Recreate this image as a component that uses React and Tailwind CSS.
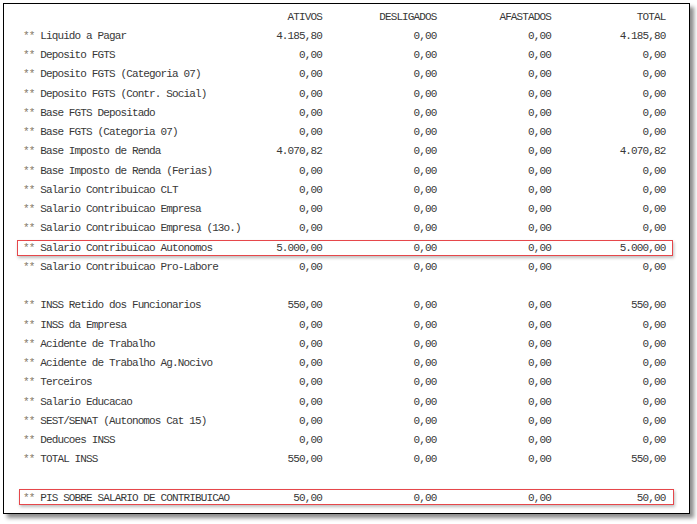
const ZERO = '0,00'

const rows = [
  { label: 'Liquido a Pagar', v: ['4.185,80', ZERO, ZERO, '4.185,80'] },
  { label: 'Deposito FGTS' },
  { label: 'Deposito FGTS (Categoria 07)' },
  { label: 'Deposito FGTS (Contr. Social)' },
  { label: 'Base FGTS Depositado' },
  { label: 'Base FGTS (Categoria 07)' },
  { label: 'Base Imposto de Renda', v: ['4.070,82', ZERO, ZERO, '4.070,82'] },
  { label: 'Base Imposto de Renda (Ferias)' },
  { label: 'Salario Contribuicao CLT' },
  { label: 'Salario Contribuicao Empresa' },
  { label: 'Salario Contribuicao Empresa (13o.)' },
  { label: 'Salario Contribuicao Autonomos', v: ['5.000,00', ZERO, ZERO, '5.000,00'], box: 'a' },
  { label: 'Salario Contribuicao Pro-Labore' },
  { blank: true },
  { label: 'INSS Retido dos Funcionarios', v: ['550,00', ZERO, ZERO, '550,00'] },
  { label: 'INSS da Empresa' },
  { label: 'Acidente de Trabalho' },
  { label: 'Acidente de Trabalho Ag.Nocivo' },
  { label: 'Terceiros' },
  { label: 'Salario Educacao' },
  { label: 'SEST/SENAT (Autonomos Cat 15)' },
  { label: 'Deducoes INSS' },
  { label: 'TOTAL INSS', v: ['550,00', ZERO, ZERO, '550,00'] },
  { blank: true },
  { label: 'PIS SOBRE SALARIO DE CONTRIBUICAO', v: ['50,00', ZERO, ZERO, '50,00'], box: 'b' },
]

const grid = 'grid grid-cols-[240px_59px_114.5px_114.5px_114.5px] items-center h-[19.25px] pl-[19px]'

function Row({ row }) {
  if (row.blank) return <div className="h-[19.25px]" />
  const vals = row.v || [ZERO, ZERO, ZERO, ZERO]
  return (
    <div className={'relative ' + grid}>
      {row.box === 'a' && (
        <div className="absolute left-[13px] top-[1px] w-[656px] h-[16px] border border-[#e6474b] shadow-[1px_2px_3px_rgba(0,0,0,0.25)]" />
      )}
      {row.box === 'b' && (
        <div className="absolute left-[15px] top-0 w-[655px] h-[16px] border border-[#e6474b] shadow-[1px_2px_3px_rgba(0,0,0,0.25)]" />
      )}
      <div className="whitespace-pre">
        <span className="text-[#857868]">**</span> {row.label}
      </div>
      {vals.map((x, i) => (
        <div key={i} className="text-right">{x}</div>
      ))}
    </div>
  )
}

export default function App() {
  return (
    <div className="w-[697px] h-[524px] bg-white overflow-hidden pt-[3px] pl-[3px]">
      <div className="w-[687px] h-[511px] border border-black bg-white shadow-[4px_4px_4px_rgba(0,0,0,0.45)] pt-[3.5px] font-['Liberation_Mono',monospace] text-[11px] tracking-[-0.87px] text-[#383838] leading-none">
        <div className={grid}>
          <div />
          <div className="text-right">ATIVOS</div>
          <div className="text-right">DESLIGADOS</div>
          <div className="text-right">AFASTADOS</div>
          <div className="text-right">TOTAL</div>
        </div>
        {rows.map((r, i) => (
          <Row key={i} row={r} />
        ))}
      </div>
    </div>
  )
}
